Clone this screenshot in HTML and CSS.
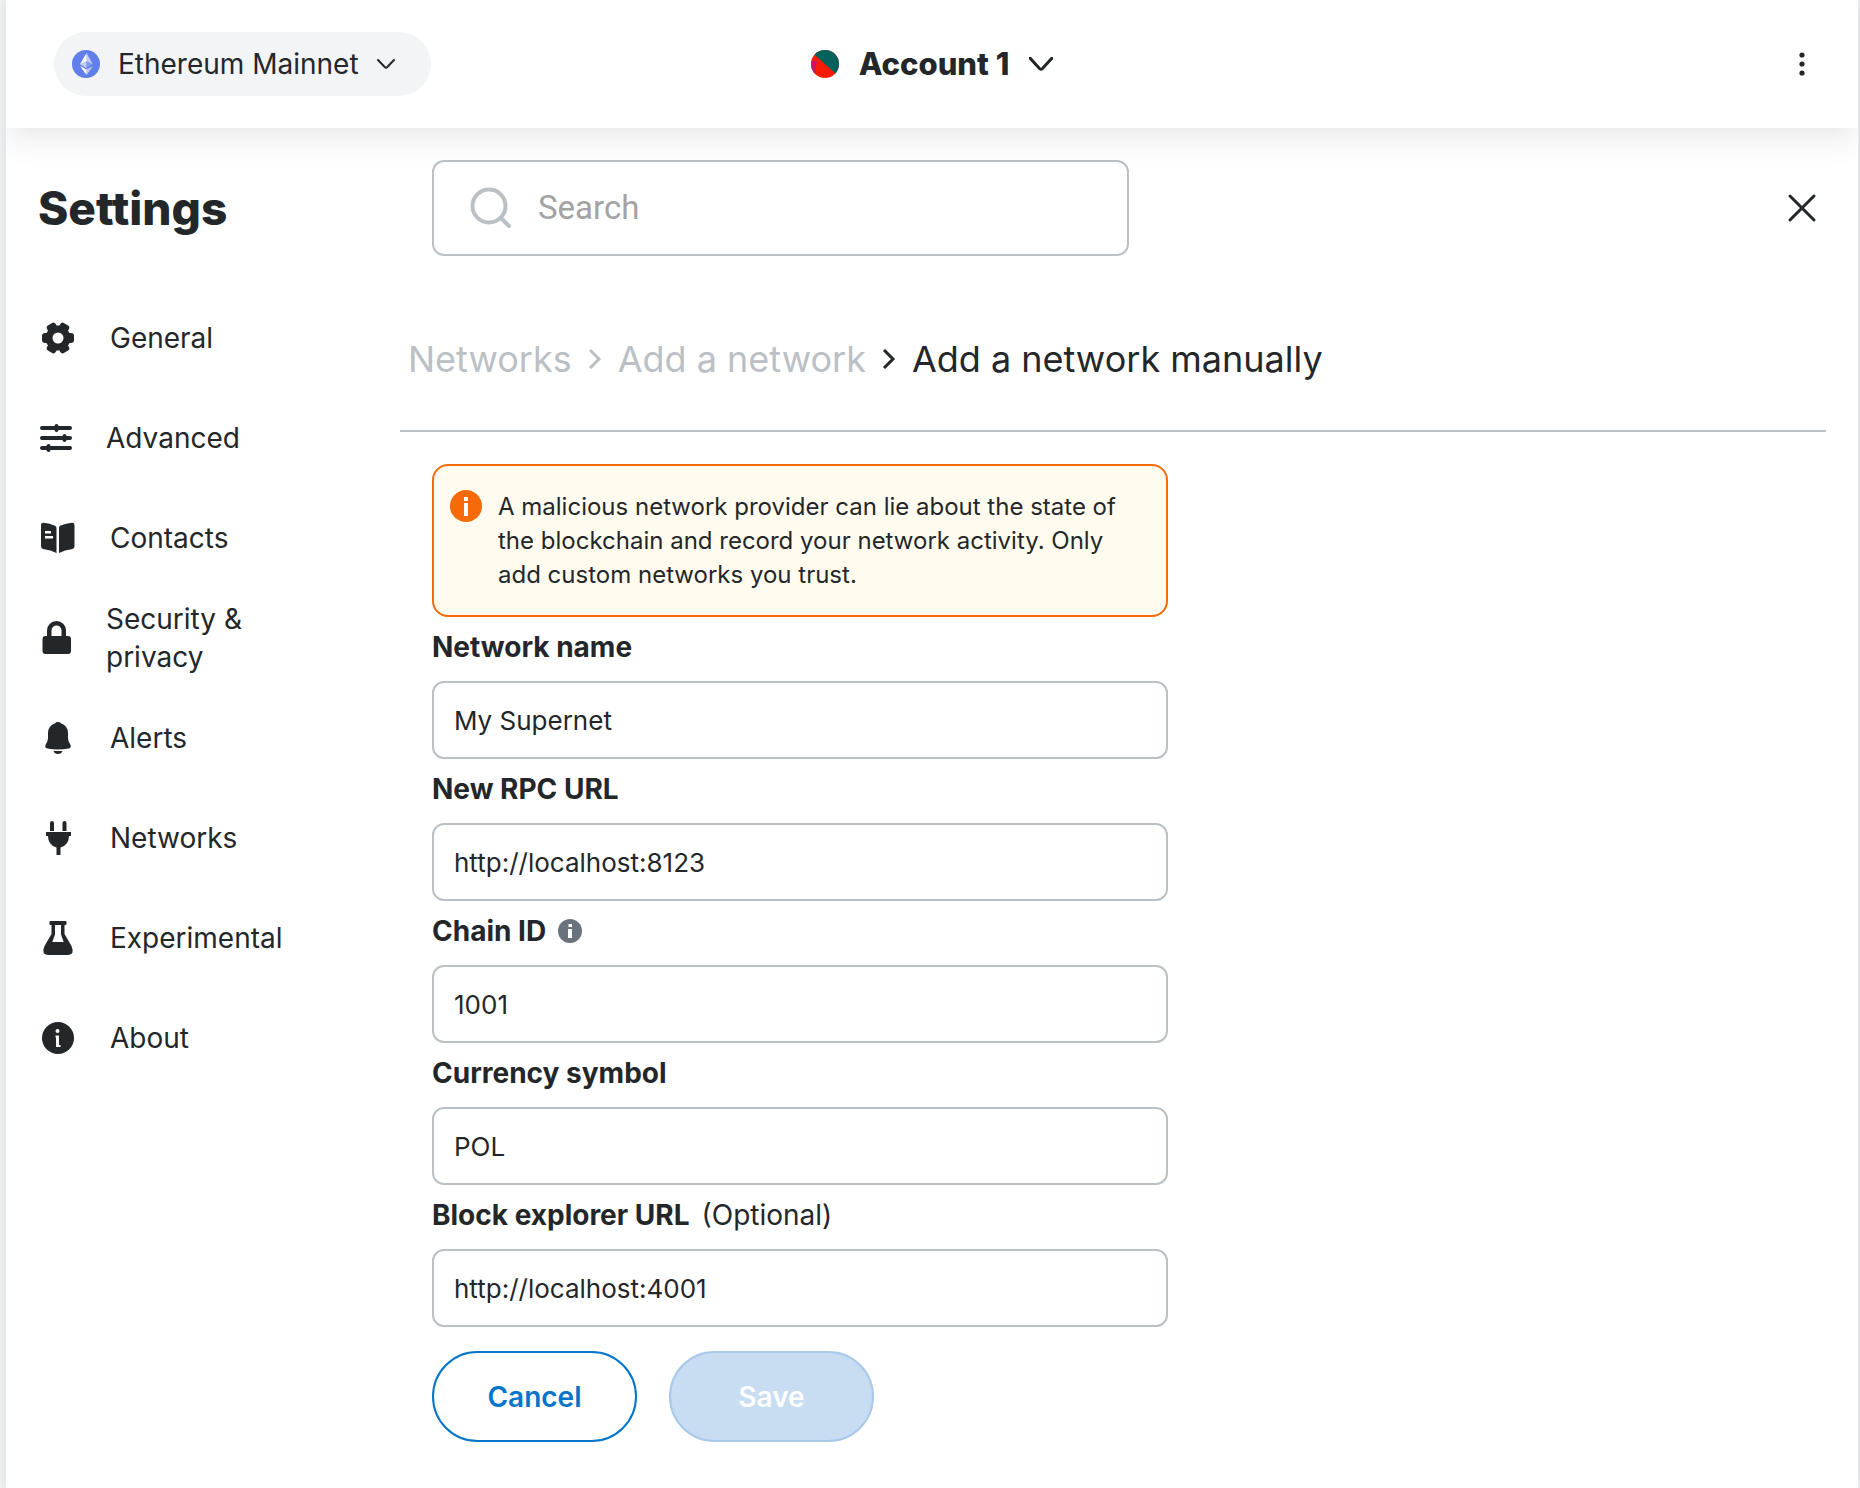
FILE: index.html
```html
<!DOCTYPE html>
<html lang="en">
<head>
<meta charset="utf-8">
<meta name="viewport" content="width=device-width, initial-scale=1">
<title>Settings</title>
<link rel="stylesheet" href="styles.css">
</head>
<body>
<div class="app">
  <header class="topbar">
    <button class="network-picker" type="button">
      <svg class="network-logo" viewBox="0 0 28 28" aria-hidden="true">
        <circle cx="14" cy="14" r="14" fill="#627eea"/>
        <path d="M14.5 3v8.2l6.300 3z" fill="#fff" fill-opacity=".6"/>
        <path d="M14.500 3 8 14.200l6.500-3z" fill="#fff"/>
        <path d="M14.500 19.500V25l6.500-9z" fill="#fff" fill-opacity=".6"/>
        <path d="M14.500 25v-5.500L8 16z" fill="#fff"/>
        <path d="M14.500 18.200l6.300-4-6.300-3z" fill="#fff" fill-opacity=".2"/>
        <path d="M8 14.200l6.500 4v-7z" fill="#fff" fill-opacity=".6"/>
      </svg>
      <span>Ethereum Mainnet</span>
      <svg class="chevron-small" viewBox="0 0 18 10" aria-hidden="true"><path d="M1 1l6.700 7q1.300 1.200 2.600 0L17 1"/></svg>
    </button>
    <button class="account-picker" type="button">
      <svg class="avatar" viewBox="0 0 28 28" aria-hidden="true">
        <defs><clipPath id="avatar-clip"><circle cx="14" cy="14" r="14"/></clipPath></defs>
        <g clip-path="url(#avatar-clip)">
          <path d="M0 0h28v28H0z" fill="#fb1b05"/>
          <path d="M0 1 4 5l21 19 3 3V0H0z" fill="#03625c"/>
          <path d="M0 11h6L4 24H0z" fill="#c8146c"/>
        </g>
      </svg>
      <span>Account 1</span>
      <svg class="chevron-large" viewBox="0 0 24 14" aria-hidden="true"><path d="M1 1l9.500 10.500q1.500 1.500 3 0L23 1"/></svg>
    </button>
    <button class="icon-button" type="button" aria-label="Account options">
      <svg viewBox="0 0 32 32" aria-hidden="true"><circle cx="16" cy="7" r="2.600"/><circle cx="16" cy="16" r="2.600"/><circle cx="16" cy="25" r="2.600"/></svg>
    </button>
  </header>

  <div class="settings-head">
    <h1>Settings</h1>
    <label class="search">
      <svg viewBox="0 0 42 42" aria-hidden="true"><circle cx="19" cy="19" r="16.500"/><path d="M31 31l8 8"/></svg>
      <input type="search" placeholder="Search" aria-label="Search">
    </label>
    <button class="icon-button close" type="button" aria-label="Close">
      <svg viewBox="0 0 32 32" aria-hidden="true"><path d="M4 4l24 24M28 4L4 28"/></svg>
    </button>
  </div>

  <div class="settings-body">
    <nav class="tabs" aria-label="Settings sections">
      <a href="#general">
        <svg viewBox="0 0 36 36" aria-hidden="true">
          <circle cx="18" cy="18" r="9" fill="none" stroke="#24272a" stroke-width="7"/>
          <rect x="25" y="13" width="9" height="10" rx="3"/>
          <rect x="25" y="13" width="9" height="10" rx="3" transform="rotate(60 18 18)"/>
          <rect x="25" y="13" width="9" height="10" rx="3" transform="rotate(120 18 18)"/>
          <rect x="25" y="13" width="9" height="10" rx="3" transform="rotate(180 18 18)"/>
          <rect x="25" y="13" width="9" height="10" rx="3" transform="rotate(240 18 18)"/>
          <rect x="25" y="13" width="9" height="10" rx="3" transform="rotate(300 18 18)"/>
        </svg>
        <span>General</span>
      </a>
      <a href="#advanced" class="tight">
        <svg viewBox="0 0 36 36" aria-hidden="true"><g fill="none" stroke="#24272a" stroke-width="4" stroke-linecap="round"><path d="M4 8h28M4 18h28M4 28h28M18.500 6v4M26.500 16v4M10.500 26v4"/></g></svg>
        <span>Advanced</span>
      </a>
      <a href="#contacts">
        <svg viewBox="0 0 36 36" aria-hidden="true"><path fill-rule="evenodd" d="M1 5q0-2.500 2.500-2.300Q10 3.300 15 5.700q1.500.8 1.500 2V33q-6-3-12.500-3.800-3-.4-3-3.200zM5 11v2.500h6V11zM5 16v2.500h8V16z"/><path d="M34.500 5q0-2.500-2.500-2.300-6 .6-12 3-1 .8-1 2V33q6-3 12.500-3.800 3-.4 3-3.200z"/></svg>
        <span>Contacts</span>
      </a>
      <a href="#security" class="tight">
        <svg viewBox="0 0 36 36" aria-hidden="true"><path fill-rule="evenodd" d="M9 16v-5.500a9.500 9.500 0 0 1 19 0V16h2q3 0 3 3v12q0 3-3 3H7.500q-3 0-3-3V19q0-3 3-3zM13.500 16h10v-5.500a5 5 0 0 0-10 0z"/></svg>
        <span>Security &amp; privacy</span>
      </a>
      <a href="#alerts">
        <svg viewBox="0 0 36 36" aria-hidden="true"><path d="M18 2q2.300 0 2.800 1.300Q28 6 28 13v5q0 2.500 1.500 5l1 2q1 3-2 3.600Q24 29.500 18 29.500t-10.500-1q-3-.5-2-3.500l1-2Q8 20.500 8 18v-5q0-7 7.200-9.700Q15.700 2 18 2zM13.500 31h9q-1 3-4.500 3t-4.500-3z"/></svg>
        <span>Alerts</span>
      </a>
      <a href="#networks">
        <svg viewBox="0 0 36 36" aria-hidden="true"><path d="M10 3q0-2 2-2t2 2v8h-4zM22.500 3q0-2 2-2t2 2v8h-4zM6 12h25v4h-2q0 9-8.500 11.500V35h-4v-7.500Q8 25 8 16H6z"/></svg>
        <span>Networks</span>
      </a>
      <a href="#experimental">
        <svg viewBox="0 0 36 36" aria-hidden="true"><path fill-rule="evenodd" d="M10.500 1h15q1 0 1 1v2q0 1-1 1h-1v9l7 12q3.500 8.500-3.500 9H8q-7-.5-3.500-9l7-12V5h-1q-1 0-1-1V2q0-1 1-1zM15 5v9.500L12.300 22h11.400L21 14.500V5z"/></svg>
        <span>Experimental</span>
      </a>
      <a href="#about">
        <svg viewBox="0 0 36 36" aria-hidden="true"><circle cx="18" cy="18" r="16"/><g fill="#fff"><circle cx="17.500" cy="11" r="2"/><path d="M15.500 15.500h3.500v9.500h1.500v2h-4.500v-9.500h-.500z"/></g></svg>
        <span>About</span>
      </a>
    </nav>

    <main class="content">
      <nav class="breadcrumb" aria-label="Breadcrumb">
        <a href="#networks">Networks</a>
        <svg viewBox="0 0 14 20" aria-hidden="true"><path d="M2 1l9 9-9 9"/></svg>
        <a href="#add-network">Add a network</a>
        <svg class="current" viewBox="0 0 14 20" aria-hidden="true"><path d="M2 1l9 9-9 9"/></svg>
        <span class="current">Add a network manually</span>
      </nav>

      <form class="network-form">
        <div class="warning" role="note">
          <svg viewBox="0 0 32 32" aria-hidden="true"><circle cx="16" cy="16" r="16" fill="#f66a0a"/><path d="M14 7h4v4h-4zM14 13h4v13h-4z" fill="#fff"/></svg>
          <p>A malicious network provider can lie about the state of the blockchain and record your network activity. Only add custom networks you trust.</p>
        </div>
        <div class="field">
          <div class="field-label"><label for="network-name">Network name</label></div>
          <input id="network-name" type="text" value="My Supernet">
        </div>
        <div class="field">
          <div class="field-label"><label for="rpc-url">New RPC URL</label></div>
          <input id="rpc-url" type="text" value="http://localhost:8123">
        </div>
        <div class="field">
          <div class="field-label">
            <label for="chain-id">Chain ID</label>
            <svg viewBox="0 0 24 24" aria-hidden="true"><circle cx="12" cy="12" r="12" fill="#6a737d"/><path d="M10.500 5h3.500v3h-3.500zM10 10h4v9h-4z" fill="#fff"/></svg>
          </div>
          <input id="chain-id" type="text" value="1001">
        </div>
        <div class="field">
          <div class="field-label"><label for="currency">Currency symbol</label></div>
          <input id="currency" type="text" value="POL">
        </div>
        <div class="field">
          <div class="field-label"><label for="explorer-url">Block explorer URL</label><span>(Optional)</span></div>
          <input id="explorer-url" type="text" value="http://localhost:4001">
        </div>
        <div class="actions">
          <button class="button" type="button">Cancel</button>
          <button class="button primary" type="submit" disabled>Save</button>
        </div>
      </form>
    </main>
  </div>
</div>
</body>
</html>
```
FILE: styles.css
```css
:root {
  --text: #24272a;
  --muted: #bbc0c5;
  --blue: #0376c9;
  --orange: #f66a0a;
}

* {
  box-sizing: border-box;
}

body {
  margin: 0;
  background: #f2f4f6;
  color: var(--text);
  font-family: Inter, "Liberation Sans", sans-serif;
  font-size: 28px;
  line-height: 38px;
}

h1,
p {
  margin: 0;
}

a {
  color: inherit;
  text-decoration: none;
}

button,
input {
  font: inherit;
  color: inherit;
}

button {
  border: 0;
  padding: 0;
  background: none;
}

svg {
  flex: none;
}

.app {
  min-height: 100vh;
  margin: 0 2px 0 6px;
  background: #fff;
  box-shadow: 0 0 14px rgba(0, 0, 0, 0.12);
}

.topbar {
  display: grid;
  grid-template-columns: 1fr auto 1fr;
  align-items: center;
  height: 128px;
  padding: 0 48px;
  box-shadow: 0 8px 32px rgba(0, 0, 0, 0.1);
  clip-path: inset(0 0 -48px 0);
}

.topbar .icon-button {
  justify-self: end;
  margin-right: -8px;
}

.network-picker {
  display: flex;
  align-items: center;
  justify-self: start;
  gap: 18px;
  height: 64px;
  padding: 0 36px 0 18px;
  border-radius: 32px;
  background: #f2f4f6;
}

.network-logo,
.avatar {
  width: 28px;
  height: 28px;
}

.account-picker {
  display: flex;
  align-items: center;
  gap: 20px;
  font-size: 31px;
  font-weight: 800;
}

.chevron-small,
.chevron-large {
  fill: none;
  stroke: var(--text);
  stroke-width: 2;
  stroke-linecap: round;
}

.chevron-small {
  width: 18px;
  height: 10px;
}

.chevron-large {
  width: 24px;
  height: 14px;
  stroke-width: 3;
}

.icon-button,
.icon-button svg {
  display: block;
  width: 32px;
  height: 32px;
  fill: var(--text);
}

.settings-head {
  display: flex;
  align-items: center;
  padding: 32px 40px 32px 32px;
}

h1 {
  width: 394px;
  font-size: 46px;
  font-weight: 800;
  line-height: 56px;
}

.search {
  display: flex;
  flex: 0 1 697px;
  align-items: center;
  gap: 26px;
  height: 96px;
  padding: 0 36px;
  border: 2px solid var(--muted);
  border-radius: 12px;
}

.search svg {
  width: 42px;
  height: 42px;
  fill: none;
  stroke: var(--muted);
  stroke-width: 4;
  stroke-linecap: round;
}

.search input {
  flex: 1;
  min-width: 0;
  padding: 0;
  border: 0;
  outline: 0;
  background: none;
  font-family: Roboto, sans-serif;
  font-size: 33px;
}

.search input::placeholder {
  color: #a3a3a3;
}

.close {
  margin-left: auto;
}

.close svg {
  stroke: var(--text);
  stroke-width: 3;
  stroke-linecap: round;
}

.settings-body {
  display: grid;
  grid-template-columns: 394px minmax(0, 1fr);
}

.tabs a {
  display: flex;
  align-items: center;
  gap: 34px;
  height: 100px;
  padding-left: 34px;
}

.tabs .tight {
  gap: 32px;
  padding-left: 32px;
}

.tabs svg {
  width: 36px;
  height: 36px;
  fill: var(--text);
}

.tabs span {
  max-width: 200px;
}

.breadcrumb {
  display: flex;
  align-items: center;
  gap: 16px;
  height: 144px;
  margin-right: 32px;
  padding-left: 8px;
  border-bottom: 2px solid var(--muted);
  color: var(--muted);
  font-size: 36px;
}

.breadcrumb svg {
  width: 14px;
  height: 20px;
  fill: none;
  stroke: var(--muted);
  stroke-width: 3;
}

.breadcrumb .current {
  color: var(--text);
  stroke: var(--text);
}

.breadcrumb span.current {
  stroke: none;
}

.network-form {
  max-width: 800px;
  padding: 32px;
}

.warning {
  display: flex;
  gap: 16px;
  padding: 24px 40px 23px 16px;
  border: 2px solid var(--orange);
  border-radius: 16px;
  background: #fffbee;
  font-size: 24px;
  line-height: 34px;
}

.warning svg {
  width: 32px;
  height: 32px;
}

.field-label {
  display: flex;
  align-items: center;
  gap: 12px;
  padding: 11px 0 15px;
}

.field-label label {
  font-weight: 700;
}

.field-label svg {
  width: 24px;
  height: 24px;
}

.field input {
  display: block;
  width: 100%;
  height: 78px;
  padding: 0 20px;
  border: 2px solid var(--muted);
  border-radius: 12px;
  background: #fff;
  font-size: 26px;
}

.actions {
  display: flex;
  gap: 32px;
  padding-top: 24px;
}

.button {
  width: 205px;
  height: 91px;
  border: 2px solid var(--blue);
  border-radius: 46px;
  color: var(--blue);
  font-weight: 600;
}

.primary {
  border-color: #a9c9ea;
  background: #c8dcf2;
  color: #fff;
}
```
